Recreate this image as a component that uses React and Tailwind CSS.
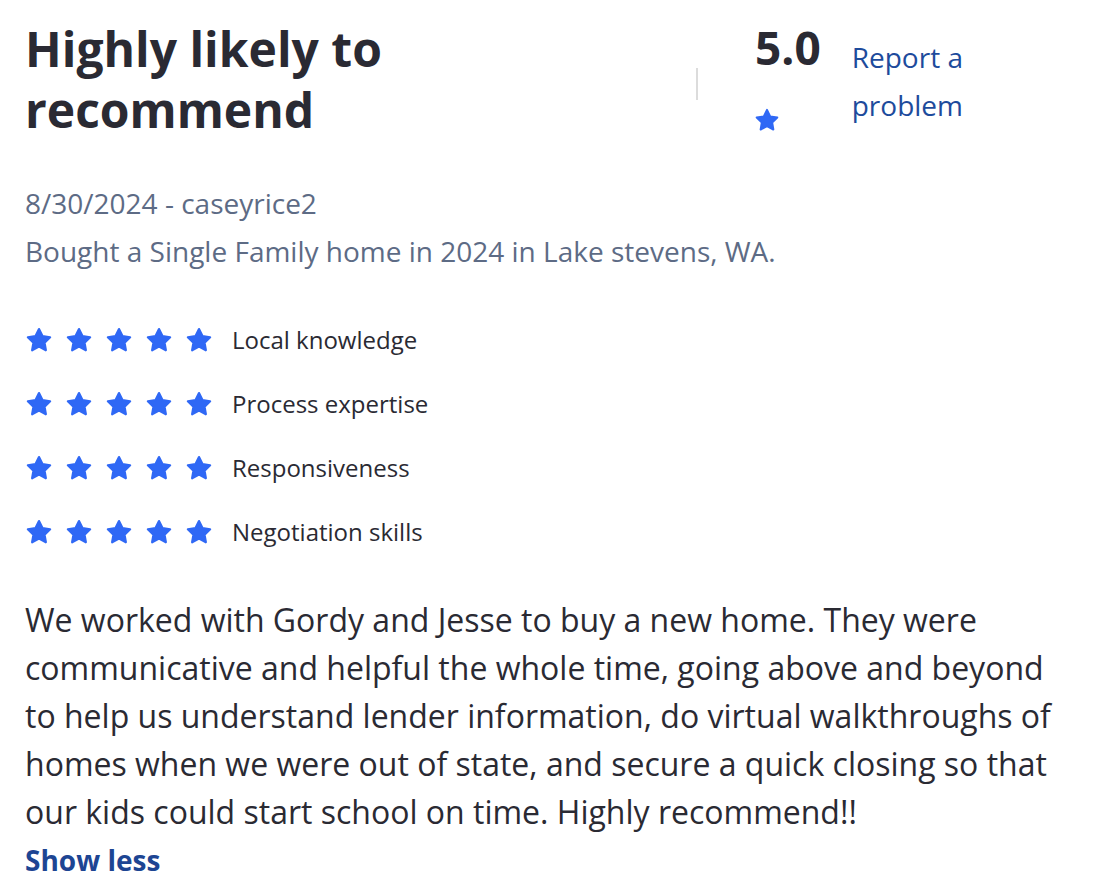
import React from "react";

const font = { fontFamily: '"Open Sans", "Noto Sans", sans-serif' };

function Star({ className = "w-[26px] h-[26px]" }) {
  return (
    <svg viewBox="0 0 24 24" className={className} aria-hidden="true">
      <path
        d="M12 1.9L15.2 8.4L22.3 9.45L17.15 14.45L18.35 21.5L12 18.15L5.65 21.5L6.85 14.45L1.7 9.45L8.8 8.4Z"
        fill="#2f68f5"
        stroke="#2f68f5"
        strokeWidth="2"
        strokeLinejoin="round"
      />
    </svg>
  );
}

const categories = [
  "Local knowledge",
  "Process expertise",
  "Responsiveness",
  "Negotiation skills",
];

export default function App() {
  return (
    <div className="min-h-screen bg-white px-[25px] pt-[18px] text-[#2a2a33]" style={font}>
      {/* title + overall rating */}
      <div className="flex items-start">
        <h1 className="w-[671px] text-[48px] leading-[61px] font-bold text-[#2a2a33]">
          Highly likely to
          <br />
          recommend
        </h1>
        <div className="mt-[50px] h-[32px] w-[2px] bg-[#dcdcdc]" />
        <div className="ml-[57px] mt-[6px] flex flex-col">
          <span className="text-[46px] leading-[46px] font-bold">5.0</span>
          <Star className="mt-[38px] w-[24px] h-[24px]" />
        </div>
        <a href="#" className="ml-[31px] mt-[15px] w-[140px] text-[28px] leading-[48px] text-[#1d4b9c]">
          Report a problem
        </a>
      </div>

      {/* reviewer meta */}
      <div className="mt-[39px] text-[28px] leading-[48px] text-[#5d6b85]">
        <p>8/30/2024 - caseyrice2</p>
        <p>Bought a Single Family home in 2024 in Lake stevens, WA.</p>
      </div>

      {/* sub ratings */}
      <ul className="mt-[33px]">
        {categories.map((c) => (
          <li key={c} className="flex h-[64px] items-center">
            <div className="ml-[1px] flex gap-[14px]">
              {[0, 1, 2, 3, 4].map((i) => (
                <Star key={i} />
              ))}
            </div>
            <span className="ml-[20px] text-[24px] leading-[32px]">{c}</span>
          </li>
        ))}
      </ul>

      {/* review text */}
      <p className="mt-[32px] w-[1056px] text-[32px] leading-[48px]">
        We worked with Gordy and Jesse to buy a new home. They were communicative and helpful the
        whole time, going above and beyond to help us understand lender information, do virtual
        walkthroughs of homes when we were out of state, and secure a quick closing so that our kids
        could start school on time. Highly recommend!!
      </p>
      <button className="mt-[6px] text-[28px] leading-[36px] font-bold text-[#1d4593]">
        Show less
      </button>
    </div>
  );
}
